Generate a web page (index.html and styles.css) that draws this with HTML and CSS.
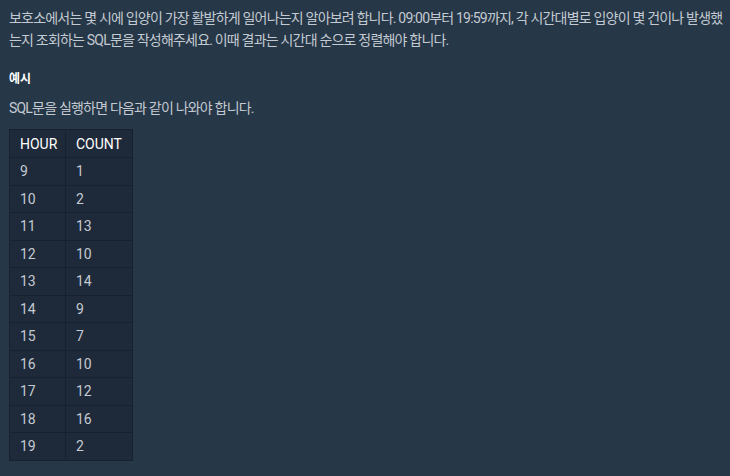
FILE: index.html
```html
<!DOCTYPE html>
<html lang="ko">
<head>
<meta charset="utf-8">
<link rel="stylesheet" href="styles.css">
</head>
<body>
<div class="content">
  <p class="desc">보호소에서는 몇 시에 입양이 가장 활발하게 일어나는지 알아보려 합니다. 09:00부터 19:59까지, 각 시간대별로 입양이 몇 건이나 발생했는지 조회하는 SQL문을 작성해주세요. 이때 결과는 시간대 순으로 정렬해야 합니다.</p>
  <h5 class="heading">예시</h5>
  <p class="desc">SQL문을 실행하면 다음과 같이 나와야 합니다.</p>
  <table class="result">
    <colgroup>
      <col class="col-hour">
      <col class="col-count">
    </colgroup>
    <thead>
      <tr><th>HOUR</th><th>COUNT</th></tr>
    </thead>
    <tbody>
      <tr><td>9</td><td>1</td></tr>
      <tr><td>10</td><td>2</td></tr>
      <tr><td>11</td><td>13</td></tr>
      <tr><td>12</td><td>10</td></tr>
      <tr><td>13</td><td>14</td></tr>
      <tr><td>14</td><td>9</td></tr>
      <tr><td>15</td><td>7</td></tr>
      <tr><td>16</td><td>10</td></tr>
      <tr><td>17</td><td>12</td></tr>
      <tr><td>18</td><td>16</td></tr>
      <tr><td>19</td><td>2</td></tr>
    </tbody>
  </table>
</div>
</body>
</html>
```
FILE: styles.css
```css
html, body {
  margin: 0;
  padding: 0;
  background: #263747;
}
.content {
  padding: 7px 4px 0 9px;
  font-family: Roboto, "Noto Sans CJK KR", sans-serif;
  color: #c4cad2;
  font-size: 14px;
}
.desc {
  margin: 0;
  line-height: 22px;
  word-break: break-all;
  letter-spacing: -0.8px;
}
.heading {
  margin: 18px 0 8px;
  font-size: 12px;
  font-weight: 700;
  color: #ffffff;
  line-height: 20px;
}
.result {
  margin-top: 10px;
  border-collapse: collapse;
  background: #1e2939;
  table-layout: fixed;
  width: 123px;
}
.col-hour { width: 56px; }
.col-count { width: 67px; }
.result th, .result td {
  border: 1px solid #172130;
  text-align: left;
  padding: 0 0 0 10px;
  height: 26.5px;
  font-family: Roboto, "Noto Sans CJK KR", sans-serif;
  font-size: 14px;
  font-weight: 400;
  white-space: nowrap;
}
.result th {
  color: #ffffff;
  height: 27px;
}
```
